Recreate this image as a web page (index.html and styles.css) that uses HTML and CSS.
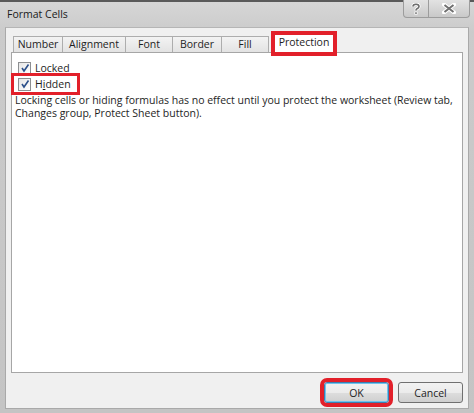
FILE: index.html
```html
<!DOCTYPE html>
<html>
<head>
<meta charset="utf-8">
<link rel="stylesheet" href="styles.css">
</head>
<body>
<div class="window">
  <div class="titlebar">
    <span class="title">Format Cells</span>
    <div class="caption-btns">
      <div class="cbtn help"><svg width="10" height="12" viewBox="0 0 10 12"><path d="M2 3.5 Q2 1.2 5 1.2 Q8 1.2 8 3.5 Q8 5 6 5.8 Q5 6.3 5 7.5" fill="none" stroke="#fff" stroke-width="3.2"/><path d="M2 3.5 Q2 1.2 5 1.2 Q8 1.2 8 3.5 Q8 5 6 5.8 Q5 6.3 5 7.5" fill="none" stroke="#6d6d6d" stroke-width="1.6"/><rect x="3.5" y="8.6" width="3" height="3" fill="#fff"/><rect x="4.2" y="9.3" width="1.6" height="1.6" fill="#6d6d6d"/></svg></div>
      <div class="cbtn close"><svg width="14" height="11" viewBox="0 0 14 11"><path d="M2 1.5 L12 9.5 M12 1.5 L2 9.5" stroke="#fff" stroke-width="4" stroke-linecap="square"/><path d="M2.5 2 L11.5 9 M11.5 2 L2.5 9" stroke="#707070" stroke-width="2"/></svg></div>
    </div>
  </div>
  <div class="client">
    <div class="tabs">
      <div class="tab">Number</div>
      <div class="tab">Alignment</div>
      <div class="tab">Font</div>
      <div class="tab">Border</div>
      <div class="tab">Fill</div>
      <div class="tab selected">Protection</div>
    </div>
    <div class="panel">
      <label class="check">
        <span class="box"><svg width="10" height="10" viewBox="0 0 10 10"><path d="M2 5 L4 8 L8.5 1.5" fill="none" stroke="#2b4f8a" stroke-width="1.6"/></svg></span>
        <span>Locked</span>
      </label>
      <label class="check marked">
        <span class="box"><svg width="10" height="10" viewBox="0 0 10 10"><path d="M2 5 L4 8 L8.5 1.5" fill="none" stroke="#2b4f8a" stroke-width="1.6"/></svg></span>
        <span>H<u>i</u>dden</span>
      </label>
      <p class="note">Locking cells or hiding formulas has no effect until you protect the worksheet (Review tab, Changes group, Protect Sheet button).</p>
    </div>
    <div class="buttons">
      <button class="btn ok">OK</button>
      <button class="btn">Cancel</button>
    </div>
  </div>
</div>
</body>
</html>
```
FILE: styles.css
```css
html, body {
  margin: 0;
  padding: 0;
}
body {
  width: 474px;
  height: 413px;
  overflow: hidden;
  background: #fff;
  font-family: "Open Sans", "Noto Sans", sans-serif;
  font-size: 10.5px;
  color: #1e1e1e;
}
.window {
  width: 474px;
  height: 413px;
  box-sizing: border-box;
  border-top: 2px solid #5a5a5a;
  background: linear-gradient(#d6d6d6, #cbcbcb 30px, #c4c4c4);
  display: flex;
  flex-direction: column;
}
.titlebar {
  height: 25px;
  display: flex;
  align-items: flex-start;
  justify-content: space-between;
  padding-left: 7px;
  padding-right: 4px;
  flex-shrink: 0;
}
.title {
  font-size: 10.5px;
  color: #1a1a1a;
  margin-top: 5px;
}
.caption-btns {
  display: flex;
  margin-top: -2px;
  border: 1px solid #9c9c9c;
  border-top: none;
  border-radius: 0 0 4px 4px;
  overflow: hidden;
  background: linear-gradient(#e2e2e2, #c9c9c9);
}
.cbtn {
  height: 17px;
  display: flex;
  align-items: center;
  justify-content: center;
}
.help {
  width: 24px;
  border-right: 1px solid #9c9c9c;
}
.close {
  width: 40px;
}
.client {
  flex: 1;
  margin: 0 5px 4px 5px;
  background: #f0f0f0;
  border: 1px solid #a9a9a9;
  border-top-color: #b5b5b5;
  padding: 5px 5px 0 5px;
  display: flex;
  flex-direction: column;
}
.tabs {
  display: flex;
  align-items: flex-end;
  padding-left: 2px;
  height: 19px;
  position: relative;
  z-index: 1;
}
.tab {
  height: 15px;
  line-height: 15px;
  border: 1px solid #adadad;
  border-bottom: none;
  border-left: none;
  background: linear-gradient(#f3f3f3, #e3e3e3);
  text-align: center;
  font-size: 10.5px;
  color: #1e1e1e;
}
.tab:first-child {
  border-left: 1px solid #adadad;
}
.tab:nth-child(1) { width: 48px; }
.tab:nth-child(2) { width: 62px; }
.tab:nth-child(3) { width: 46px; }
.tab:nth-child(4) { width: 48px; }
.tab:nth-child(5) { width: 46px; }
.tab.selected {
  width: 60px;
  height: 19px;
  line-height: 16px;
  background: #fff;
  margin-bottom: -1px;
  outline: 4px solid #e2202a;
  outline-offset: -1px;
  margin-left: 5px;
  border: none;
}
.panel {
  height: 321px;
  background: #fff;
  border: 1px solid #a6a6a6;
  box-sizing: border-box;
  padding: 7px 2px 0 2px;
  display: flex;
  flex-direction: column;
  align-items: flex-start;
}
.check {
  display: flex;
  align-items: center;
  gap: 4px;
  height: 16px;
  padding: 0 4px;
  font-size: 10.5px;
}
.check.marked {
  outline: 3.5px solid #e2202a;
  outline-offset: 0;
  padding-right: 6px;
}
.box {
  width: 11px;
  height: 11px;
  border: 1px solid #8d8f91;
  background: linear-gradient(135deg, #e6e6e6, #ffffff);
  display: flex;
  align-items: center;
  justify-content: center;
}
.check u {
  text-decoration: underline;
}
.note {
  margin: 2px 0 0 1px;
  font-size: 10.5px;
  line-height: 13px;
  width: 440px;
}
.buttons {
  display: flex;
  justify-content: flex-end;
  align-items: center;
  gap: 9px;
  margin-top: 9px;
  padding-right: 0;
}
.btn {
  width: 65px;
  height: 21px;
  font-family: inherit;
  font-size: 10.5px;
  color: #1e1e1e;
  border: 1px solid #707070;
  border-radius: 3px;
  background: linear-gradient(#f2f2f2, #ebebeb 50%, #dddddd 51%, #cfcfcf);
  padding: 0;
}
.btn.ok {
  border-color: #3c7fb1;
  box-shadow: inset 0 0 0 1px #6fc3ee;
  outline: 4px solid #e2202a;
  outline-offset: 0;
}
```
